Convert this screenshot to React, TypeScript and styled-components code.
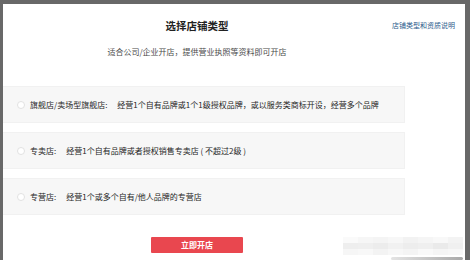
import styled, { createGlobalStyle } from "styled-components";

const GlobalStyle = createGlobalStyle`
    html, body {
        margin: 0;
        padding: 0;
        background: #686868;
    }
    body {
        font-family: "Noto Sans CJK SC", "Noto Sans", sans-serif;
    }
`;

interface ShopType {
    label: string;
    desc: string;
}

const shopTypes: ShopType[] = [
    { label: "旗舰店/卖场型旗舰店:", desc: "经营1个自有品牌或1个1级授权品牌，或以服务类商标开设，经营多个品牌" },
    { label: "专卖店:", desc: "经营1个自有品牌或者授权销售专卖店 ( 不超过2级 )" },
    { label: "专营店:", desc: "经营1个或多个自有/他人品牌的专营店" },
];

// blurred watermark blocks at the lower right corner
const mosaic = [
    ["#fafafa", "#f6f6f6", "#f4f4f4", "#f7f7f7", "#f2f2f2", "#f5f5f5", "#f8f8f8", "#f3f3f3"],
    ["#eeeeee", "#efefef", "#ececec", "#f1f1f1", "#ededed", "#efefef", "#eaeaea", "#f0f0f0"],
    ["#f6f6f6", "#f8f8f8", "#f3f3f3", "#f7f7f7", "#f4f4f4", "#f9f9f9", "#f5f5f5", "#f7f7f7"],
];

const App = () => {
    return (
        <Page>
            <GlobalStyle />
            <Modal>
                <Header>
                    <Title>选择店铺类型</Title>
                    <HelpLink href="#">店铺类型和资质说明</HelpLink>
                </Header>
                <Subtitle>适合公司/企业开店，提供营业执照等资料即可开店</Subtitle>

                <OptionList>
                    {shopTypes.map((t) => (
                        <OptionRow key={t.label}>
                            <Radio />
                            <OptionLabel>{t.label}</OptionLabel>
                            <OptionDesc>{t.desc}</OptionDesc>
                        </OptionRow>
                    ))}
                </OptionList>

                <Footer>
                    <SubmitButton>立即开店</SubmitButton>
                </Footer>

                <Watermark>
                    {mosaic.map((row, i) => (
                        <MosaicRow key={i}>
                            {row.map((c, j) => (
                                <MosaicCell key={j} $color={c} />
                            ))}
                        </MosaicRow>
                    ))}
                </Watermark>
                <Shadow />
            </Modal>
        </Page>
    );
};

const Page = styled.div`
    width: 470px;
    height: 260px;
    box-sizing: border-box;
    padding: 4px 5px 0 3px;
    display: flex;
    overflow: hidden;
`;

const Modal = styled.div`
    flex: 1;
    position: relative;
    background: #fff;
    display: flex;
    flex-direction: column;
`;

const Header = styled.div`
    display: flex;
    align-items: flex-start;
    padding-top: 14px;
`;

const Title = styled.h1`
    width: 388px;
    margin: 0;
    text-align: center;
    font-size: 10.5px;
    line-height: 16px;
    font-weight: 700;
    color: #222;
`;

const HelpLink = styled.a`
    margin-left: 1px;
    margin-top: 2px;
    font-size: 7px;
    line-height: 10px;
    color: #2b5b8c;
    text-decoration: none;
    white-space: nowrap;
`;

const Subtitle = styled.p`
    width: 388px;
    margin: 13px 0 0;
    text-align: center;
    font-size: 8px;
    line-height: 10px;
    color: #4a4a4a;
`;

const OptionList = styled.div`
    display: flex;
    flex-direction: column;
    gap: 9px;
    margin-top: 29px;
    width: 402px;
`;

const OptionRow = styled.div`
    height: 37px;
    box-sizing: border-box;
    display: flex;
    align-items: center;
    padding-left: 14px;
    background: #f7f7f7;
    border: 1px solid #f1f1f1;
    border-left: none;
    font-size: 8px;
    color: #262626;
    white-space: nowrap;
`;

const Radio = styled.span`
    width: 8px;
    height: 8px;
    box-sizing: border-box;
    border-radius: 50%;
    border: 1px solid #e2e2e2;
    background: #fff;
    margin-right: 5px;
    flex-shrink: 0;
`;

const OptionLabel = styled.span`
    margin-right: 10px;
`;

const OptionDesc = styled.span``;

const Footer = styled.div`
    width: 388px;
    display: flex;
    justify-content: center;
    margin-top: 22px;
`;

const SubmitButton = styled.button`
    width: 92px;
    height: 16px;
    padding: 0;
    border: none;
    border-radius: 1px;
    background: #e9474f;
    color: #fff;
    font-family: inherit;
    font-size: 8px;
    font-weight: 700;
    line-height: 16px;
`;

const Watermark = styled.div`
    position: absolute;
    left: 340px;
    top: 233px;
    display: flex;
    flex-direction: column;
`;

const MosaicRow = styled.div`
    display: flex;
`;

const MosaicCell = styled.span<{ $color: string }>`
    width: 15px;
    height: 6px;
    background: ${(p) => p.$color};
`;

const Shadow = styled.div`
    position: absolute;
    left: 388px;
    top: 253px;
    width: 72px;
    height: 3px;
    border-radius: 2px;
    background: linear-gradient(to right, #e4e4e4, #a9a9a9);
`;

export default App;
